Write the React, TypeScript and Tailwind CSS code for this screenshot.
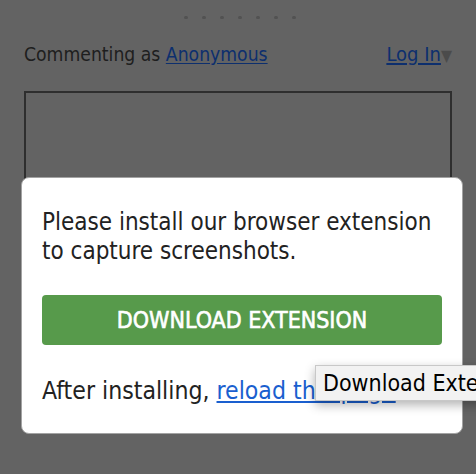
import React from "react";

export default function App() {
  const font = { fontFamily: '"DejaVu Sans Condensed", "DejaVu Sans", sans-serif' };
  return (
    <div className="relative w-[476px] h-[474px] overflow-hidden bg-[#636363]" style={font}>
      {/* page content (dimmed) */}
      <div className="px-6">
        <div className="flex justify-center gap-[14px] pt-4 pl-1">
          {[0, 1, 2, 3, 4, 5, 6].map((i) => (
            <span key={i} className="block w-1 h-[3px] rounded-full bg-[#525252]" />
          ))}
        </div>
        <div className="mt-[23px] flex items-baseline justify-between text-[19.2px] leading-[24px] text-[#1e1e1e]">
          <span>
            Commenting as <span className="text-[#0d2f6e] underline underline-offset-2">Anonymous</span>
          </span>
          <span className="flex items-baseline">
            <span className="text-[20px] text-[#0d2f6e] underline underline-offset-2">Log In</span>
            <span className="text-[#4b4b4b] text-[16px]">▼</span>
          </span>
        </div>
        <div className="mt-[23px] h-[200px] border-2 border-[#2e2e2e]" />
      </div>

      {/* modal */}
      <div className="absolute left-[21px] top-[177px] w-[442px] h-[257px] rounded-[8px] border border-[#a3a3a3] bg-white px-5 pt-[30px] text-[#222]">
        <p className="text-[24px] leading-[29px] whitespace-nowrap">
          Please install our browser extension
          <br />
          to capture screenshots.
        </p>
        <div className="mt-[29px] flex h-[50px] items-center justify-center rounded-[4px] bg-[#579a4b] text-[23px] text-white [-webkit-text-stroke:0.6px_white]">
          DOWNLOAD EXTENSION
        </div>
        <p className="mt-[31px] text-[24.6px] leading-[29px] whitespace-nowrap">
          After installing, <span className="text-[#1a5fcf] underline underline-offset-2">reload this page</span>.
        </p>
      </div>

      {/* tooltip */}
      <div className="absolute left-[315px] top-[365px] h-[36px] w-[200px] border border-[#c8c8c8] bg-[#f2f2f2] pl-[7px] text-[23px] leading-[34px] text-black shadow-[0_4px_10px_rgba(0,0,0,0.3)] whitespace-nowrap">
        Download Extension
      </div>
    </div>
  );
}
